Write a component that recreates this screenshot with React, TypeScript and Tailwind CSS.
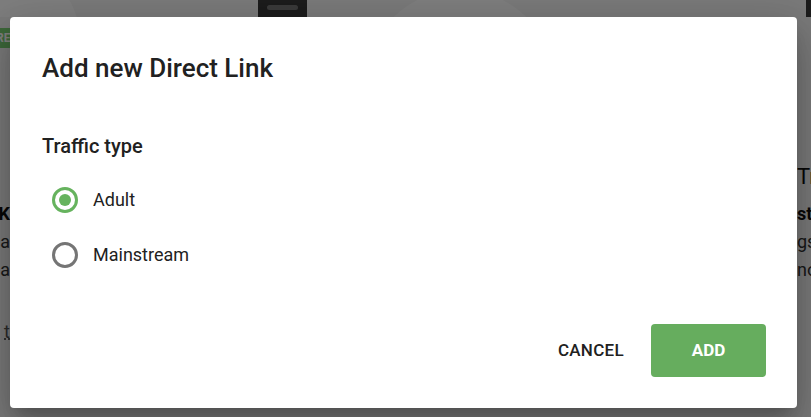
import { useState } from 'react'

const options = ['Adult', 'Mainstream']

function Radio({ checked }: { checked: boolean }) {
  return (
    <span
      className={
        'flex h-[26px] w-[26px] shrink-0 items-center justify-center rounded-full border-[3px] ' +
        (checked ? 'border-[#66b35e]' : 'border-[#757575]')
      }
    >
      {checked && <span className="h-[12px] w-[12px] rounded-full bg-[#66b35e]" />}
    </span>
  )
}

export default function App() {
  const [traffic, setTraffic] = useState('Adult')

  return (
    <div className="relative h-[417px] w-[811px] overflow-hidden bg-[#f4f4f4] font-['Roboto',sans-serif]">
      {/* page behind the dialog */}
      <div className="flex h-[17px] items-start overflow-hidden">
        <div className="-ml-[80px] -mt-[40px] h-[160px] w-[160px] shrink-0 rounded-full bg-[#fdfdfd]" />
        <div className="ml-[178px] flex h-[17px] w-[49px] shrink-0 items-start justify-center bg-[#383838] pt-[5px]">
          <span className="h-[5px] w-[31px] rounded-sm bg-[#777]" />
        </div>
        <div className="ml-[58px] -mt-[10px] h-[190px] w-[190px] shrink-0 rounded-full bg-[#fdfdfd]" />
        <div className="ml-[251px] flex h-[17px] w-[49px] shrink-0 items-start justify-center bg-[#383838] pt-[5px]">
          <span className="h-[5px] w-[33px] rounded-sm bg-[#777]" />
        </div>
      </div>
      <div className="mt-[11px] h-[20px] w-[10px] overflow-hidden bg-[#7bd074] text-[12px] font-bold leading-[20px] text-white">
        <span className="-ml-[4px]">RE</span>
      </div>
      <div className="-ml-[248px] mt-[152px] flex text-[18px] text-[#111]">
        <div className="w-[258px] shrink-0 overflow-hidden text-right">
          <div className="h-[28px] font-bold">Black PK</div>
          <div className="h-[28px] text-[#333]">location ca</div>
          <div className="h-[28px] text-[#333]">on a</div>
          <div className="mt-[34px] h-[28px] text-[#555]">
            sort by <span className="underline decoration-dotted">t</span>
          </div>
        </div>
        <div className="w-[787px] shrink-0" />
        <div className="-mt-[40px] w-[250px] shrink-0">
          <div className="h-[40px] text-[22px]">Traffic</div>
          <div className="h-[28px] font-bold">stats</div>
          <div className="h-[28px] text-[#333]">gs</div>
          <div className="h-[28px] text-[#333]">no</div>
        </div>
      </div>

      <div className="absolute inset-0 bg-black/50" />

      <div className="absolute left-[10px] top-[17px] flex h-[391px] w-[787px] flex-col rounded-[4px] bg-white px-8 shadow-[0_11px_15px_-7px_rgba(0,0,0,0.2),0_24px_38px_3px_rgba(0,0,0,0.14),0_9px_46px_8px_rgba(0,0,0,0.12)]">
        <h2 className="mt-[35px] text-[26px] font-medium leading-[32px] text-[#212121]">Add new Direct Link</h2>
        <div className="mt-[48px] text-[20px] font-medium leading-[28px] text-[#212121]">Traffic type</div>
        <div className="mt-[12px] flex flex-col">
          {options.map((o) => (
            <button
              key={o}
              type="button"
              onClick={() => setTraffic(o)}
              className="ml-[10px] flex h-[55px] items-center gap-[15px] text-left"
            >
              <Radio checked={traffic === o} />
              <span className="text-[18px] leading-[24px] text-[#212121]">{o}</span>
            </button>
          ))}
        </div>
        <div className="mt-auto mb-[31px] mr-[-1px] flex items-center justify-end gap-[27px]">
          <button type="button" className="text-[17px] font-medium uppercase tracking-[0.3px] text-[#212121]">
            Cancel
          </button>
          <button
            type="button"
            className="h-[53px] w-[115px] rounded-[4px] bg-[#66ad5e] text-[17px] font-bold uppercase text-white"
          >
            Add
          </button>
        </div>
      </div>
    </div>
  )
}
